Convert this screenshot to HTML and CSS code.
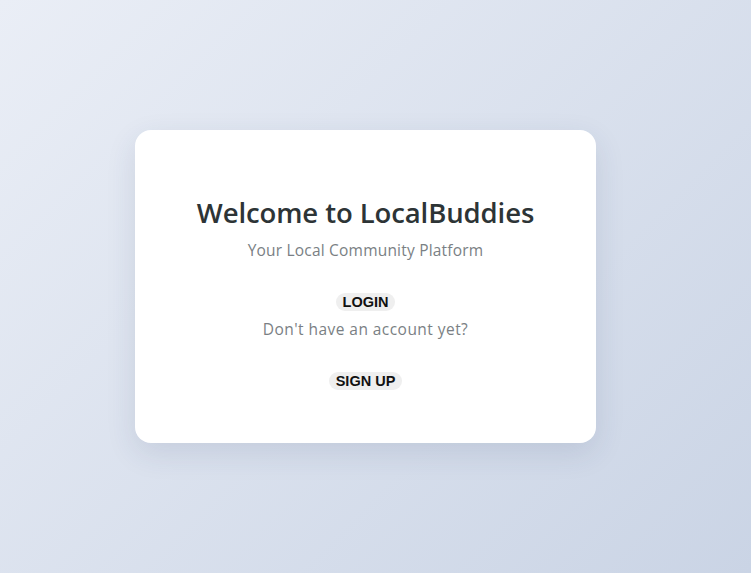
FILE: index.html
```html
<!DOCTYPE html>
<html lang="en">
<head>
<meta charset="utf-8">
<title>LocalBuddies</title>
<link rel="stylesheet" href="styles.css">
</head>
<body>
<main class="page">
  <section class="card">
    <h1 class="title">Welcome to LocalBuddies</h1>
    <p class="subtitle">Your Local Community Platform</p>
    <button class="btn btn-login">LOGIN</button>
    <p class="hint">Don't have an account yet?</p>
    <button class="btn btn-signup">SIGN UP</button>
  </section>
</main>
</body>
</html>
```

FILE: styles.css
```css
html, body {
  margin: 0;
  padding: 0;
  height: 100%;
}
body {
  background: linear-gradient(135deg, #eaeef6 0%, #cad4e5 100%);
  font-family: "Open Sans", "DejaVu Sans", sans-serif;
}
.page {
  min-height: 100vh;
  display: flex;
  align-items: center;
  justify-content: center;
  padding-right: 20px;
  box-sizing: border-box;
}
.card {
  width: 461px;
  height: 313px;
  box-sizing: border-box;
  background: #ffffff;
  border-radius: 16px;
  box-shadow: 0 10px 30px rgba(40, 60, 100, 0.12);
  display: flex;
  flex-direction: column;
  align-items: center;
  padding-top: 66px;
}
.title {
  margin: 0;
  font-size: 27.5px;
  font-weight: 600;
  color: #2d3436;
  line-height: 34px;
  letter-spacing: -0.1px;
}
.subtitle {
  margin: 10px 0 0;
  font-size: 15.5px;
  font-weight: 400;
  color: #7a7f84;
  line-height: 20px;
  letter-spacing: 0.2px;
}
.btn {
  font-family: "Liberation Sans", Arial, sans-serif;
  font-weight: 700;
  font-size: 14.5px;
  color: #111;
  background: #efefef;
  border: none;
  border-radius: 10px;
  padding: 1px 7px;
  line-height: 16px;
}
.btn-login {
  margin-top: 33px;
}
.hint {
  margin: 8px 0 0;
  font-size: 15.5px;
  color: #7a7f84;
  line-height: 20px;
  letter-spacing: 0.45px;
}
.btn-signup {
  margin-top: 33px;
}
```
